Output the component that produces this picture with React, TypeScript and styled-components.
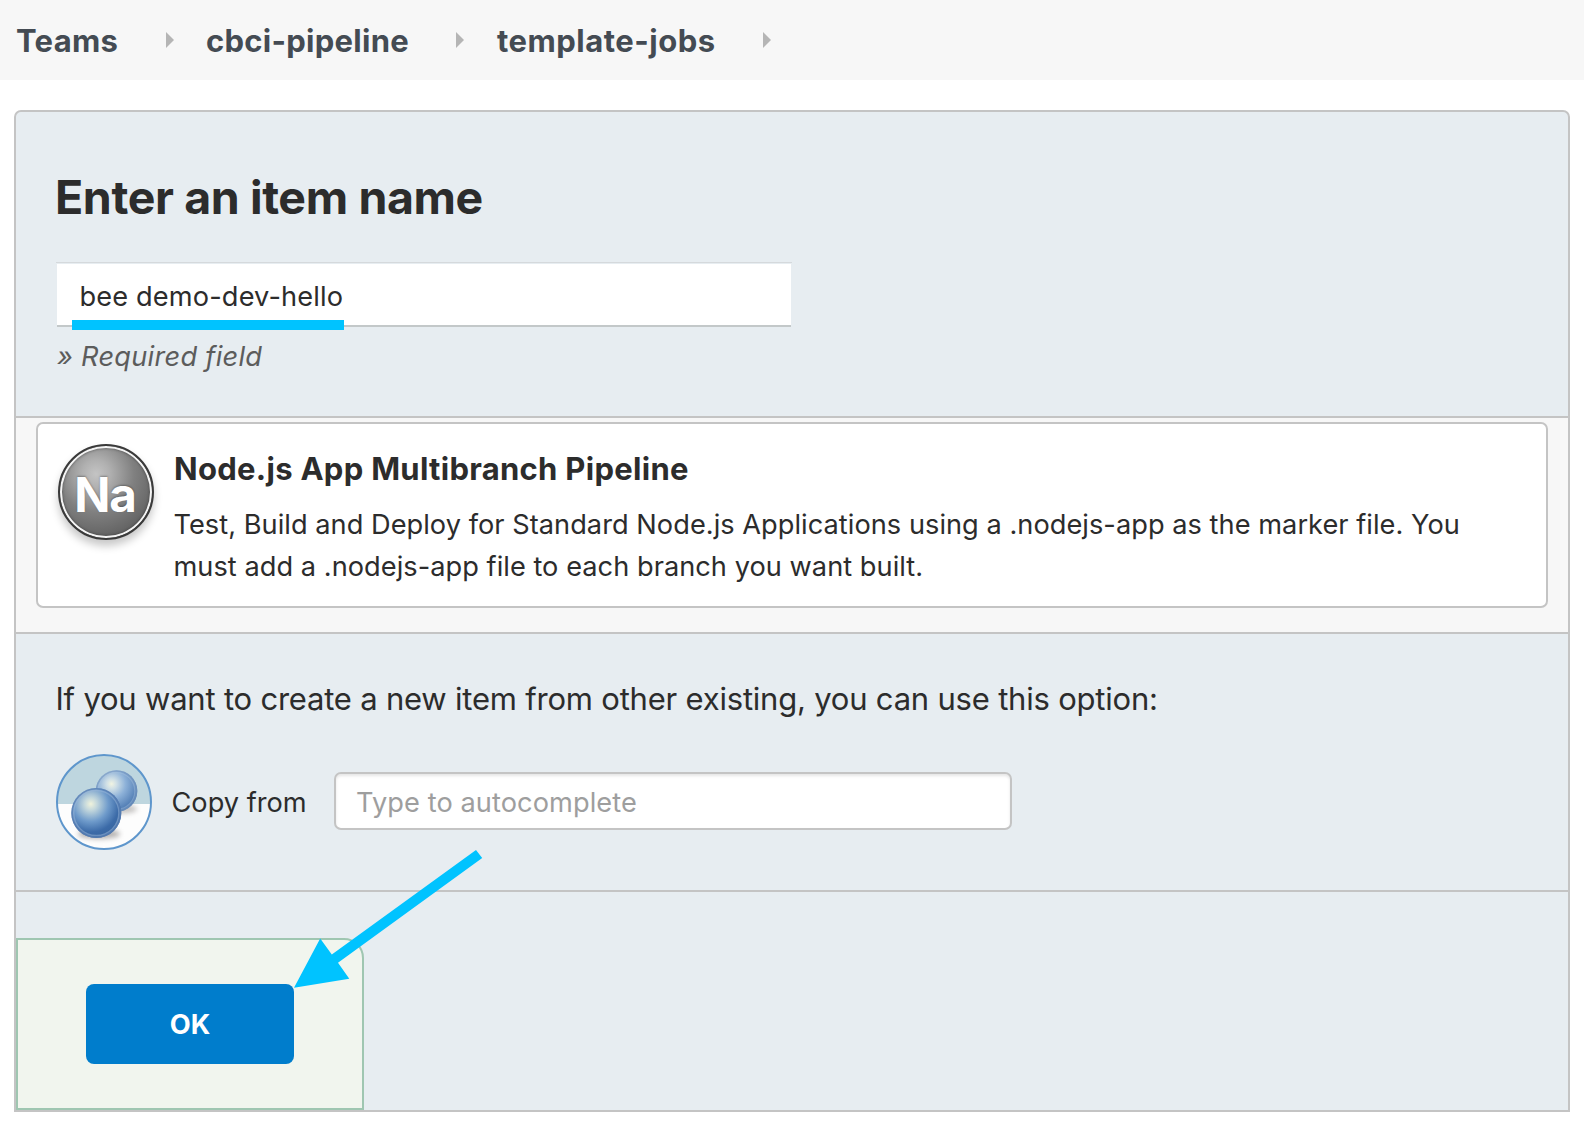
import React, { useState } from "react";
import styled, { createGlobalStyle } from "styled-components";

const border = "#c4c4c4";
const panelBlue = "#e7edf1";
const highlight = "#00c3ff";

const GlobalStyle = createGlobalStyle`
  *, *::before, *::after { box-sizing: border-box; }
  html, body { margin: 0; padding: 0; background: #fff; }
  body {
    font-family: Inter, "Liberation Sans", sans-serif;
    color: #2c2c2c;
    -webkit-font-smoothing: antialiased;
  }
`;

const Page = styled.div`
  position: relative;
  width: 1584px;
  height: 1128px;
  overflow: hidden;
  background: #fff;
`;

const Breadcrumbs = styled.nav`
  display: flex;
  gap: 32px;
  height: 80px;
  padding-left: 16px;
  background: #f7f7f7;
`;

const Crumb = styled.a<{ $width: number; $tracking: number; $indent?: number }>`
  display: flex;
  align-items: center;
  width: ${(p) => p.$width}px;
  padding-top: 2px;
  padding-left: ${(p) => p.$indent ?? 0}px;
  font-size: 31px;
  font-weight: 700;
  line-height: 78px;
  letter-spacing: ${(p) => p.$tracking}px;
  white-space: nowrap;
  color: #444b53;
`;

const CrumbArrow = styled.i`
  width: 0;
  height: 0;
  margin: 30px 0 0 auto;
  align-self: flex-start;
  border-left: 8px solid #b5b5b5;
  border-top: 8px solid transparent;
  border-bottom: 8px solid transparent;
`;

const Panel = styled.form`
  display: flex;
  flex-direction: column;
  width: 1556px;
  height: 1002px;
  margin: 30px 0 0 14px;
  border: 2px solid ${border};
  border-radius: 7px 7px 0 0;
  background: ${panelBlue};
`;

const NameSection = styled.section`
  height: 306px;
  padding: 57px 40px 0;
  border-bottom: 2px solid ${border};
`;

const Heading = styled.h1`
  margin: 0 0 37px -1px;
  font-size: 46.5px;
  font-weight: 700;
  line-height: 56px;
  letter-spacing: -0.38px;
`;

const NameField = styled.div`
  position: relative;
  width: 736px;
  height: 65px;
  padding: 1px 1px 0;
  border-top: 1px solid #d5d9dc;
`;

const NameInput = styled.input`
  display: block;
  width: 734px;
  height: 63px;
  padding: 3px 22.5px 0;
  border: 0;
  border-bottom: 2px solid #c3c8c9;
  border-radius: 0;
  outline: none;
  background: #fff;
  font: 400 27.2px Inter, "Liberation Sans", sans-serif;
  letter-spacing: 0.14px;
  color: #2c2c2c;
`;

const Underline = styled.div`
  position: absolute;
  left: 16px;
  top: 57px;
  width: 272px;
  height: 10px;
  background: ${highlight};
`;

const Hint = styled.p`
  margin: 13px 0 0 1px;
  font-size: 27.2px;
  font-style: italic;
  line-height: 34px;
  letter-spacing: 0.27px;
  color: #5c5c5c;
`;

const TypesSection = styled.section`
  height: 216px;
  padding: 4px 20px 0;
  border-bottom: 2px solid ${border};
  background: #f7f7f7;
`;

const TypeCard = styled.article`
  display: flex;
  gap: 20px;
  height: 186px;
  padding: 20px;
  border: 2px solid ${border};
  border-radius: 7px;
  background: #fff;
`;

const Badge = styled.div`
  flex: none;
  width: 96px;
  height: 96px;
  padding: 3px 2px 0 0;
  border: 2px solid #3a3a3a;
  border-radius: 50%;
  background: radial-gradient(circle at 36px 28px, #c4c4c4 0, #b0b0b0 14px, #808080 38px, #606060 66px, #525252 90px);
  box-shadow: inset 0 0 0 2px #f4f4f4, inset 0 0 2px 3px rgba(40, 40, 40, 0.3), 0 6px 8px rgba(0, 0, 0, 0.22);
  font-size: 47.5px;
  font-weight: 700;
  line-height: 92px;
  letter-spacing: -1.2px;
  text-align: center;
  color: #fff;
  text-shadow: 0 -1px 2px rgba(0, 0, 0, 0.3);
`;

const TypeBody = styled.div`
  padding-top: 5px;
`;

const TypeTitle = styled.h2`
  margin: 0 0 15px;
  font-size: 31px;
  font-weight: 700;
  line-height: 40px;
  letter-spacing: 0.29px;
`;

const TypeText = styled.p`
  width: 1300px;
  margin: 0 0 0 -0.5px;
  font-size: 27.2px;
  line-height: 42px;
  letter-spacing: 0.035px;
`;

const CopySection = styled.section`
  height: 258px;
  padding: 45px 40px 0;
  border-bottom: 2px solid ${border};
`;

const CopyIntro = styled.p`
  margin: 0 0 35px -0.5px;
  font-size: 31px;
  line-height: 40px;
  letter-spacing: -0.21px;
`;

const CopyRow = styled.div`
  display: flex;
  align-items: center;
  height: 96px;
`;

const CopyLabel = styled.label`
  width: 162.5px;
  margin-left: 19.5px;
  padding-top: 2px;
  font-size: 27.2px;
  line-height: 40px;
`;

const CopyInput = styled.input`
  width: 678px;
  height: 58px;
  margin: -2px 0 0;
  padding: 2px 20px 0;
  border: 2px solid ${border};
  border-radius: 7px;
  outline: none;
  background: #fff;
  box-shadow: inset 0 2px 3px rgba(0, 0, 0, 0.1);
  font: 400 27.2px Inter, "Liberation Sans", sans-serif;
  letter-spacing: 0.08px;
  color: #2c2c2c;
  &::placeholder { color: #9e9e9e; opacity: 1; }
`;

const Footer = styled.footer`
  display: flex;
  flex: 1;
  align-items: flex-end;
`;

const ButtonBox = styled.div`
  display: flex;
  width: 348px;
  height: 172px;
  padding: 44px 68px;
  border: 2px solid #9fc6b1;
  border-radius: 0 20px 0 0;
  background: #f1f5ee;
`;

const OkButton = styled.button`
  width: 208px;
  height: 80px;
  padding: 0;
  border: 0;
  border-radius: 8px;
  background: #007dcc;
  font: 700 27.2px Inter, "Liberation Sans", sans-serif;
  color: #fff;
`;

const PointerArrow = styled.svg`
  position: absolute;
  left: 290px;
  top: 846px;
  pointer-events: none;
`;

function SpheresIcon() {
  return (
    <svg width="96" height="96" viewBox="0 0 96 96">
      <defs>
        <clipPath id="disc"><circle cx="48" cy="48" r="47" /></clipPath>
        <radialGradient id="backBall" cx="0.38" cy="0.33" r="0.68">
          <stop offset="0" stopColor="#f1f4e2" />
          <stop offset="0.18" stopColor="#cfdfe6" />
          <stop offset="0.5" stopColor="#8db1d8" />
          <stop offset="1" stopColor="#4a77b0" />
        </radialGradient>
        <radialGradient id="frontBall" cx="0.39" cy="0.32" r="0.7">
          <stop offset="0" stopColor="#f0f3dc" />
          <stop offset="0.18" stopColor="#c3d7dc" />
          <stop offset="0.5" stopColor="#6f9bcb" />
          <stop offset="0.8" stopColor="#3c6ba8" />
          <stop offset="1" stopColor="#36649f" />
        </radialGradient>
        <filter id="soft" x="-30%" y="-60%" width="160%" height="220%">
          <feGaussianBlur stdDeviation="2.5" />
        </filter>
      </defs>
      <g clipPath="url(#disc)">
        <rect width="96" height="50" fill="#bed6df" />
        <rect y="50" width="96" height="46" fill="#fdfdfd" />
        <ellipse cx="65" cy="55" rx="16" ry="4.5" fill="#8e8a88" opacity="0.5" filter="url(#soft)" />
        <circle cx="60.5" cy="37" r="20.8" fill="url(#backBall)" />
        <circle cx="60.5" cy="37" r="20" fill="none" stroke="#7897c0" strokeOpacity="0.6" strokeWidth="1.6" />
        <circle cx="60.5" cy="37" r="18.4" fill="none" stroke="#a9c2df" strokeOpacity="0.4" strokeWidth="1.4" />
        <ellipse cx="43" cy="80" rx="21" ry="5" fill="#8e8a88" opacity="0.65" filter="url(#soft)" />
        <circle cx="40.3" cy="59" r="25" fill="url(#frontBall)" />
        <circle cx="40.3" cy="59" r="24.2" fill="none" stroke="#5b80b4" strokeOpacity="0.75" strokeWidth="1.6" />
        <circle cx="40.3" cy="59" r="22.6" fill="none" stroke="#9bb8da" strokeOpacity="0.5" strokeWidth="1.5" />
      </g>
      <circle cx="48" cy="48" r="47" fill="none" stroke="#5e96cc" strokeWidth="2" />
    </svg>
  );
}

const crumbs = [
  { label: "Teams", width: 158, tracking: 0.3 },
  { label: "cbci-pipeline", width: 258, tracking: 0.27 },
  { label: "template-jobs", width: 275, tracking: 0.5, indent: 1 },
];

export default function App() {
  const [name, setName] = useState("bee demo-dev-hello");
  const [source, setSource] = useState("");

  return (
    <>
      <GlobalStyle />
      <Page>
        <Breadcrumbs>
          {crumbs.map((crumb) => (
            <Crumb
              key={crumb.label}
              $width={crumb.width}
              $tracking={crumb.tracking}
              $indent={crumb.indent}
            >
              {crumb.label}
              <CrumbArrow />
            </Crumb>
          ))}
        </Breadcrumbs>
        <Panel onSubmit={(e) => e.preventDefault()}>
          <NameSection>
            <Heading>Enter an item name</Heading>
            <NameField>
              <NameInput value={name} onChange={(e) => setName(e.target.value)} />
              <Underline />
            </NameField>
            <Hint>» Required field</Hint>
          </NameSection>
          <TypesSection>
            <TypeCard>
              <Badge>Na</Badge>
              <TypeBody>
                <TypeTitle>Node.js App Multibranch Pipeline</TypeTitle>
                <TypeText>
                  Test, Build and Deploy for Standard Node.js Applications using a .nodejs-app as the
                  marker file. You must add a .nodejs-app file to each branch you want built.
                </TypeText>
              </TypeBody>
            </TypeCard>
          </TypesSection>
          <CopySection>
            <CopyIntro>
              If you want to create a new item from other existing, you can use this option:
            </CopyIntro>
            <CopyRow>
              <SpheresIcon />
              <CopyLabel htmlFor="from">Copy from</CopyLabel>
              <CopyInput
                id="from"
                placeholder="Type to autocomplete"
                value={source}
                onChange={(e) => setSource(e.target.value)}
              />
            </CopyRow>
          </CopySection>
          <Footer>
            <ButtonBox>
              <OkButton type="submit">OK</OkButton>
            </ButtonBox>
          </Footer>
        </Panel>
        <PointerArrow width="196" height="146" viewBox="290 846 196 146">
          <polygon
            fill={highlight}
            points="294,987.7 320.2,938.6 331.8,954.4 476,850 482.2,857.9 338,962.8 349.3,978.7"
          />
        </PointerArrow>
      </Page>
    </>
  );
}
